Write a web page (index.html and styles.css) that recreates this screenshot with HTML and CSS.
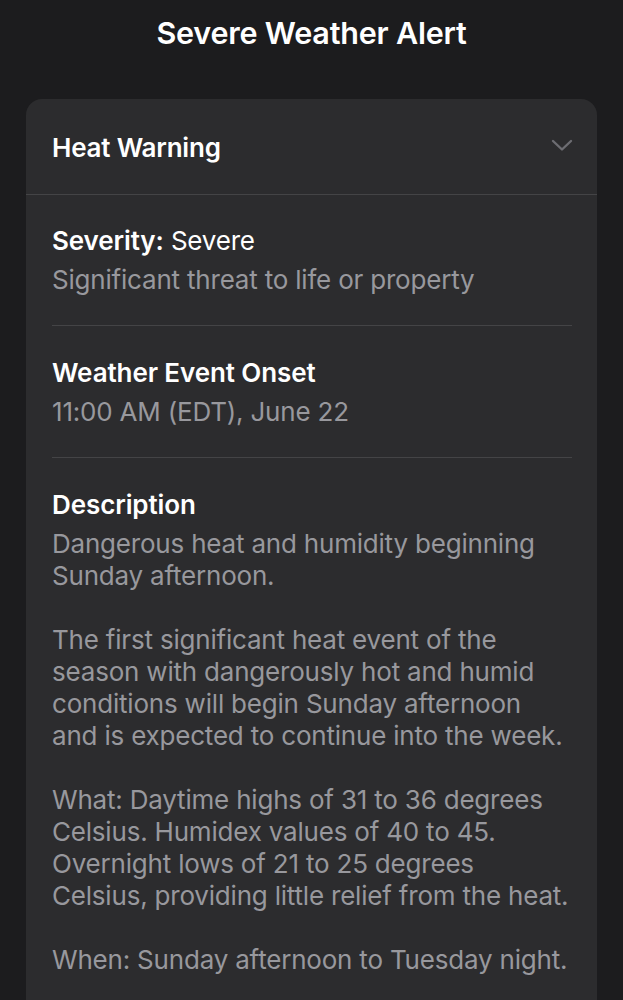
FILE: index.html
```html
<!DOCTYPE html>
<html lang="en">
<head>
    <meta charset="UTF-8">
    <meta name="viewport" content="width=device-width, initial-scale=1.0">
    <title>Severe Weather Alert</title>
    <link rel="stylesheet" href="styles.css">
</head>
<body>
<h1 class="page-title">Severe Weather Alert</h1>

<div class="alert-card">
    <div class="alert-header">
        <span class="alert-name">Heat Warning</span>
        <svg class="chevron" width="22" height="13" viewBox="0 0 22 13">
            <path d="M2 2 L11 10.5 L20 2" fill="none" stroke="#6d6d72" stroke-width="2.4" stroke-linecap="round" stroke-linejoin="round"/>
        </svg>
    </div>

    <div class="alert-body">
        <div class="alert-section">
            <p class="label"><strong>Severity:</strong> Severe</p>
            <p class="value">Significant threat to life or property</p>
        </div>

        <div class="alert-section">
            <p class="label"><strong>Weather Event Onset</strong></p>
            <p class="value">11:00 AM (EDT), June 22</p>
        </div>

        <div class="alert-section">
            <p class="label"><strong>Description</strong></p>
            <p class="value">Dangerous heat and humidity beginning Sunday afternoon.</p>
            <p class="value gap">The first significant heat event of the season with dangerously hot and humid conditions will begin Sunday afternoon and is expected to continue into the week.</p>
            <p class="value gap">What: Daytime highs of 31 to 36 degrees Celsius. Humidex values of 40 to 45. Overnight lows of 21 to 25 degrees Celsius, providing little relief from the heat.</p>
            <p class="value gap">When: Sunday afternoon to Tuesday night.</p>
        </div>
    </div>
</div>
</body>
</html>
```

FILE: styles.css
```css
:root {
  --fondo: #1c1c1e;
  --tarjeta: #2c2c2e;
  --texto: #ffffff;
  --texto-gris: #98989d;
  --linea: #444446;
}

body {
  margin: 0;
  padding: 0;
  background: var(--fondo);
  color: var(--texto);
  font-family: 'Inter', 'Roboto', sans-serif;
  overflow: hidden;
}

.page-title {
  margin: 0;
  padding-top: 13px;
  height: 99px;
  box-sizing: border-box;
  line-height: 40px;
  text-align: center;
  font-size: 30.5px;
  font-weight: 600;
  letter-spacing: -0.2px;
}

/* Tarjeta principal */
.alert-card {
  margin: 0 26px;
  background: var(--tarjeta);
  border-radius: 16px;
  min-height: 920px;
}

.alert-header {
  display: flex;
  align-items: center;
  justify-content: space-between;
  height: 96px;
  padding: 0 24px 0 26px;
  border-bottom: 1px solid var(--linea);
  box-sizing: border-box;
}

.alert-name {
  font-size: 26px;
  font-weight: 600;
  letter-spacing: -0.2px;
  margin-top: 2px;
}

.chevron {
  margin-top: -2px;
}

.alert-body {
  padding: 0 25px 0 26px;
}

.alert-section {
  padding: 31px 0 29px;
  border-bottom: 1px solid var(--linea);
}

.alert-section:first-child {
  padding-top: 30px;
}

.alert-section:last-child {
  border-bottom: none;
}

.label,
.value {
  margin: 0;
  font-size: 26px;
  line-height: 32px;
  letter-spacing: -0.2px;
}

.label {
  margin-bottom: 7px;
}

.label strong {
  font-weight: 600;
  letter-spacing: -0.1px;
}

.value {
  color: var(--texto-gris);
}

.value.gap {
  margin-top: 32px;
}
```
